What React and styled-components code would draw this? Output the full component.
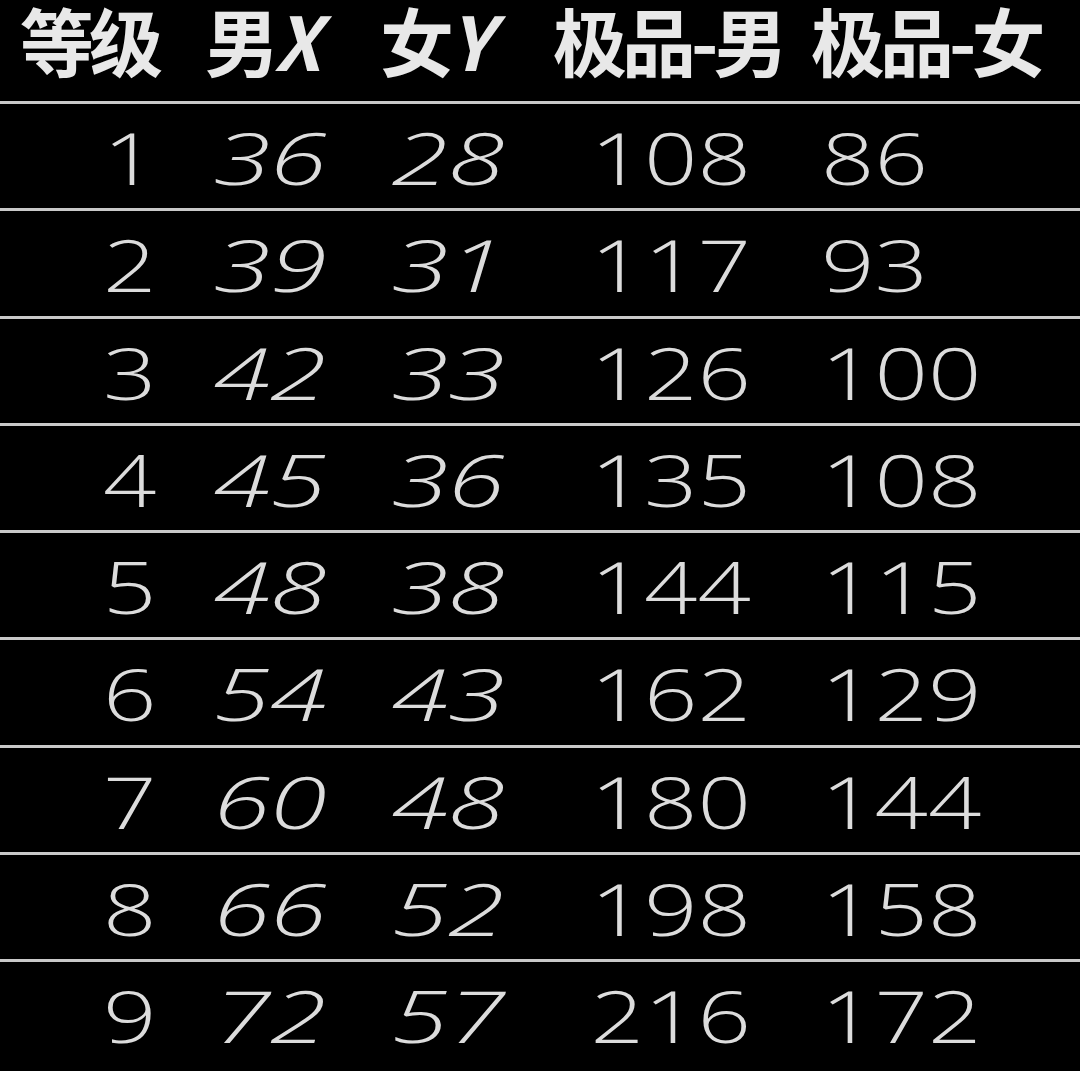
import styled, { createGlobalStyle } from 'styled-components';

const GlobalStyle = createGlobalStyle`
  html, body {
    margin: 0;
    padding: 0;
    background: #000;
  }
  #root {
    min-height: 100vh;
    background: #000;
  }
`;

const StyledTable = styled.div`
  display: flex;
  flex-direction: column;
  width: 1080px;
  background-color: #000;
`;

const StyledRow = styled.div`
  display: grid;
  grid-template-columns: 190px 160px 196px 250px 1fr;
  align-items: ${({ $head }) => ($head ? 'start' : 'center')};
  height: ${({ $head }) => ($head ? '101px' : '104.25px')};
  border-bottom: ${({ $last }) => ($last ? 'none' : '3px solid #c9c9c9')};
`;

const StyledHeadCell = styled.div`
  padding-left: ${({ $pad }) => $pad}px;
  padding-bottom: 23px;
  font-family: 'Noto Sans CJK SC', 'Noto Sans', sans-serif;
  font-weight: 700;
  font-size: 74px;
  line-height: 78px;
  letter-spacing: -5px;
  color: #e8e8e8;
  white-space: nowrap;

  em {
    font-style: italic;
    letter-spacing: 0;
  }
`;

const StyledCell = styled.div`
  display: flex;
  justify-content: ${({ $align }) =>
    $align === 'right' ? 'flex-end' : $align === 'center' ? 'center' : 'flex-start'};
  padding-left: ${({ $padLeft }) => $padLeft || 0}px;
  padding-right: ${({ $padRight }) => $padRight || 0}px;
  padding-top: 3px;
`;

const StyledNumber = styled.span`
  display: inline-block;
  font-family: 'Open Sans', 'DejaVu Sans', sans-serif;
  font-weight: 300;
  font-size: 71px;
  line-height: 1.2;
  color: #dcdcdc;
  font-style: ${({ $italic }) => ($italic ? 'italic' : 'normal')};
  transform: scaleX(${({ $italic }) => ($italic ? 1.45 : 1.32)});
  transform-origin: ${({ $align }) => $align};
  white-space: nowrap;
`;

const columns = [
  { align: 'right', padRight: 33 },
  { align: 'center', italic: true },
  { align: 'center', italic: true },
  { align: 'center' },
  { align: 'left', padLeft: 25 },
];

const rows = [
  [1, 36, 28, 108, 86],
  [2, 39, 31, 117, 93],
  [3, 42, 33, 126, 100],
  [4, 45, 36, 135, 108],
  [5, 48, 38, 144, 115],
  [6, 54, 43, 162, 129],
  [7, 60, 48, 180, 144],
  [8, 66, 52, 198, 158],
  [9, 72, 57, 216, 172],
];

const App = () => {
  return (
    <>
      <GlobalStyle />
      <StyledTable>
        <StyledRow $head>
          <StyledHeadCell $pad={20}>等级</StyledHeadCell>
          <StyledHeadCell $pad={15}>
            男<em>X</em>
          </StyledHeadCell>
          <StyledHeadCell $pad={30}>
            女<em>Y</em>
          </StyledHeadCell>
          <StyledHeadCell $pad={7}>极品-男</StyledHeadCell>
          <StyledHeadCell $pad={15}>极品-女</StyledHeadCell>
        </StyledRow>
        {rows.map((row, i) => (
          <StyledRow key={row[0]} $last={i === rows.length - 1}>
            {row.map((value, j) => (
              <StyledCell
                key={j}
                $align={columns[j].align}
                $padLeft={columns[j].padLeft}
                $padRight={columns[j].padRight}
              >
                <StyledNumber $align={columns[j].align} $italic={columns[j].italic}>
                  {value}
                </StyledNumber>
              </StyledCell>
            ))}
          </StyledRow>
        ))}
      </StyledTable>
    </>
  );
};

export default App;
